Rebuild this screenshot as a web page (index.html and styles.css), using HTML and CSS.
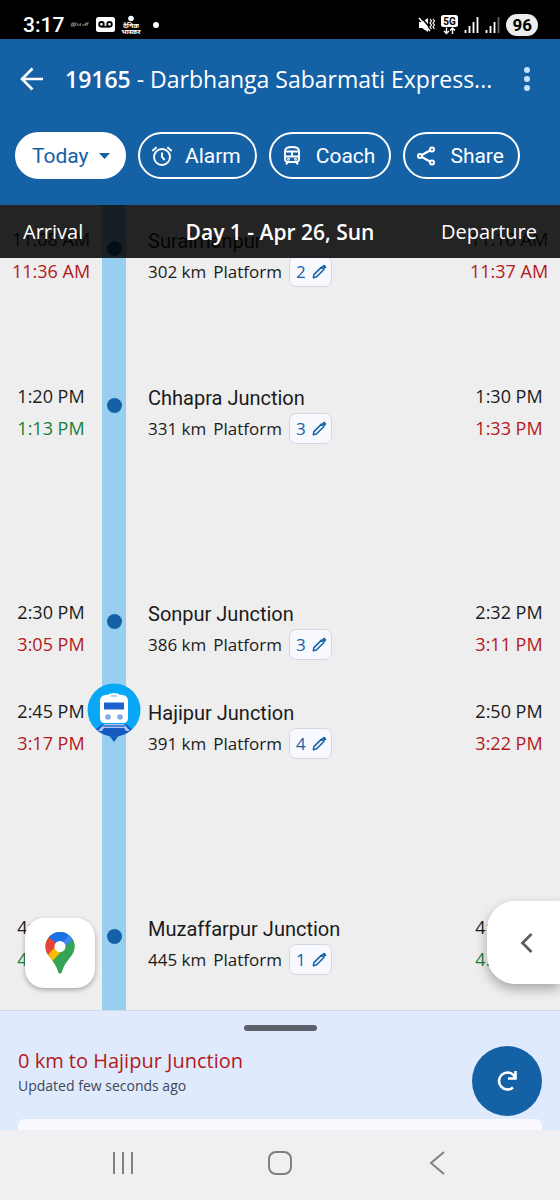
FILE: index.html
```html
<!DOCTYPE html>
<html lang="en">
<head>
  <meta charset="UTF-8">
  <title>19165 - Darbhanga Sabarmati Express</title>
  <meta name="viewport" content="width=device-width, initial-scale=1.0">
  <link rel="stylesheet" href="styles.css">
</head>
<body>
  <!-- Shared icons -->
  <svg class="defs" width="0" height="0" aria-hidden="true">
    <symbol id="pencil" viewBox="0 0 14 14">
      <path d="M1.2 12.8l.6-2.900 7-7 2.300 2.300-7 7z" fill="none" stroke="currentColor" stroke-width="1.400" stroke-linejoin="round"/>
      <path d="M9.300 2.300l1.300-1.300q.7-.6 1.400 0l1 1q.6.7 0 1.400l-1.300 1.300z" fill="currentColor"/>
    </symbol>
  </svg>

  <div class="phone">
    <div class="status-bar">
      <span class="clock">3:17</span>
      <svg width="20" height="8" viewBox="0 0 20 8" aria-hidden="true">
        <path d="M1 5l1-3h4l-1 3zM7 5l1-3M8 4h3M11 2l-1 3" fill="#555" stroke="#777" stroke-width="1"/>
        <path d="M12 4h3l1-2h2l-1 2h-2" fill="none" stroke="#8f8464" stroke-width="1.200"/>
      </svg>
      <svg width="19" height="15" viewBox="0 0 19 15" aria-hidden="true">
        <rect width="19" height="15" rx="2.500" fill="#fff"/>
        <g fill="none" stroke="#000" stroke-width="1.800"><circle cx="5.500" cy="7.300" r="2.300"/><circle cx="13.500" cy="7.300" r="2.300"/><path d="M5.500 9.700h8"/></g>
      </svg>
      <svg width="20" height="20" viewBox="0 0 20 20" aria-hidden="true">
        <circle cx="10" cy="3.500" r="2.800" fill="#fff"/>
        <text class="paper" x="10" y="13" text-anchor="middle">दैनिक</text>
        <text class="paper" x="10" y="19" text-anchor="middle">भास्कर</text>
      </svg>
      <span class="more-dot"></span>
      <div class="status-right">
        <svg width="17" height="18" viewBox="0 0 17 18" aria-hidden="true">
          <path d="M1 6h3l6-4v14l-6-4H1z" fill="#fff"/>
          <path d="M2 0l12 14" stroke="#000" stroke-width="1.500"/>
          <path d="M1 2l11 13" stroke="#fff" stroke-width="1.500"/>
          <path d="M12 3l1.500 2-1.500 2 1.500 2-1.500 2 1.500 2M15 3l1.500 2-1.500 2 1.500 2-1.500 2 1.500 2" fill="none" stroke="#fff" stroke-width="1.200"/>
        </svg>
        <svg width="17" height="20" viewBox="0 0 17 20" aria-hidden="true">
          <rect width="17" height="12" rx="2.500" fill="#fff"/>
          <text class="net" x="8.500" y="9.500" text-anchor="middle">5G</text>
          <path d="M5.500 12.500v6M3 16l2.500 2.500L8 16M11.500 19v-6M9 15.500l2.500-2.500 2.500 2.500" fill="none" stroke="#fff" stroke-width="1.400"/>
        </svg>
        <svg width="15" height="16" viewBox="0 0 15 16" aria-hidden="true">
          <path d="M1.500 13v3M5.500 9v7M9.500 5v11M13.500 0v16" stroke="#fff" stroke-width="1.800"/>
        </svg>
        <svg width="15" height="16" viewBox="0 0 15 16" aria-hidden="true">
          <path d="M1.500 13v3M5.500 9v7M9.500 5v11" stroke="#fff" stroke-width="1.800"/>
          <path d="M13.500 0v16" stroke="#666" stroke-width="1.800"/>
        </svg>
        <span class="battery">96</span>
      </div>
    </div>

    <header class="app-header">
      <div class="title-row">
        <button class="icon-btn" aria-label="Back">
          <svg width="24" height="24" viewBox="0 0 24 24"><path d="M23 12H2M12.500 1.500L2 12l10.500 10.500" fill="none" stroke="#fff" stroke-width="2.600"/></svg>
        </button>
        <h1><b>19165</b> - Darbhanga Sabarmati Express...</h1>
        <button class="icon-btn" aria-label="More options">
          <svg width="6" height="24" viewBox="0 0 6 24" fill="#c5e3fb"><circle cx="3" cy="3" r="3"/><circle cx="3" cy="12" r="3"/><circle cx="3" cy="21" r="3"/></svg>
        </button>
      </div>
      <div class="chips">
        <label class="chip chip-day">
          <select aria-label="Journey day"><option>Today</option></select>
          <svg width="11" height="6" viewBox="0 0 11 6"><path d="M0 0h11L5.500 6z" fill="#1461a6"/></svg>
        </label>
        <button class="chip">
          <svg width="22" height="22" viewBox="0 0 22 22" fill="none" stroke="#fff" stroke-width="1.900">
            <circle cx="11" cy="12" r="8"/><path d="M11 7.500V12l2.700 3M1.300 6L5.600 2.200M20.700 6l-4.300-3.800"/>
          </svg>
          Alarm
        </button>
        <button class="chip">
          <svg width="22" height="22" viewBox="0 0 22 22" fill="none" stroke="#fff" stroke-width="1.900">
            <path d="M3 6q0-4 7-4t7 4v8q0 3-3 3H6q-3 0-3-3zM3 6.500h14M3 11.500h14M10 6.500v5M6 17l-2 2.500M14 17l2 2.500"/>
            <circle cx="6.500" cy="14.300" r=".5"/><circle cx="13.500" cy="14.300" r=".5"/>
          </svg>
          Coach
        </button>
        <button class="chip">
          <svg width="22" height="22" viewBox="0 0 22 22" fill="none" stroke="#fff" stroke-width="2">
            <circle cx="4" cy="11" r="2"/><circle cx="16" cy="4.500" r="2"/><circle cx="16" cy="17.500" r="2"/><path d="M5.800 10L14 5.500M5.800 12l8.200 4.500"/>
          </svg>
          Share
        </button>
      </div>
    </header>

    <main class="timeline">
      <div class="day-bar">
        <span>Arrival</span>
        <b>Day 1 - Apr 26, Sun</b>
        <span>Departure</span>
      </div>

      <ul class="stops">
        <li class="stop gap-m">
          <div class="time">11:08 AM<span class="late">11:36 AM</span></div>
          <div class="track"><i class="dot"></i></div>
          <div class="info">
            <h2>Suraimanpur</h2>
            <p>302 km <span>Platform</span> <button class="platform">2 <svg><use href="#pencil"/></svg></button></p>
          </div>
          <div class="time">11:10 AM<span class="late">11:37 AM</span></div>
        </li>
        <li class="stop gap-l">
          <div class="time">1:20 PM<span class="early">1:13 PM</span></div>
          <div class="track"><i class="dot"></i></div>
          <div class="info">
            <h2>Chhapra Junction</h2>
            <p>331 km <span>Platform</span> <button class="platform">3 <svg><use href="#pencil"/></svg></button></p>
          </div>
          <div class="time">1:30 PM<span class="late">1:33 PM</span></div>
        </li>
        <li class="stop gap-s">
          <div class="time">2:30 PM<span class="late">3:05 PM</span></div>
          <div class="track"><i class="dot"></i></div>
          <div class="info">
            <h2>Sonpur Junction</h2>
            <p>386 km <span>Platform</span> <button class="platform">3 <svg><use href="#pencil"/></svg></button></p>
          </div>
          <div class="time">2:32 PM<span class="late">3:11 PM</span></div>
        </li>
        <li class="stop gap-l">
          <div class="time">2:45 PM<span class="late">3:17 PM</span></div>
          <div class="track">
            <!-- Current train position -->
            <svg class="train" width="54" height="60" viewBox="0 0 54 60" aria-label="Train is here">
              <defs><clipPath id="disc"><circle cx="27" cy="27" r="26.500"/></clipPath></defs>
              <path d="M15 48h24q-7 3-12 11-5-8-12-11z" fill="#1659bf"/>
              <circle cx="27" cy="27" r="26.500" fill="#08a8f7"/>
              <path d="M0 54l15-13h24l15 13z" fill="#1659bf" clip-path="url(#disc)"/>
              <path d="M17 41h20l6 7h-4l-2-3H17l-2 3h-4z" fill="#a9c4f5"/>
              <path d="M16 43h22" stroke="#1659bf" stroke-width="1.200"/>
              <path d="M13 18q0-5 5-6l4-.5q1-1.500 5-1.500t5 1.500l4 .5q5 1 5 6v17q0 5-5 5H18q-5 0-5-5z" fill="#fff"/>
              <path d="M24 13h6" stroke="#8db4ee" stroke-width="1.200"/>
              <path d="M17 19.500h20v7H17z" fill="#1c63d0"/>
              <circle cx="21" cy="34" r="2.800" fill="#83a9ed"/><circle cx="33" cy="34" r="2.800" fill="#83a9ed"/>
            </svg>
          </div>
          <div class="info">
            <h2>Hajipur Junction</h2>
            <p>391 km <span>Platform</span> <button class="platform">4 <svg><use href="#pencil"/></svg></button></p>
          </div>
          <div class="time">2:50 PM<span class="late">3:22 PM</span></div>
        </li>
        <li class="stop gap-s">
          <div class="time">4:00 PM<span class="early">4:00 PM</span></div>
          <div class="track"><i class="dot"></i></div>
          <div class="info">
            <h2>Muzaffarpur Junction</h2>
            <p>445 km <span>Platform</span> <button class="platform">1 <svg><use href="#pencil"/></svg></button></p>
          </div>
          <div class="time">4:05 PM<span class="early">4:05 PM</span></div>
        </li>
      </ul>

      <button class="map-btn" aria-label="Open map">
        <svg width="30" height="42" viewBox="0 0 30 42">
          <defs><clipPath id="pin"><path d="M15 0a14.500 14.500 0 0 1 14.500 14.500c0 6-3 9-6.500 13.500-3 4-4.500 6-6 11q-.5 2.500-2 2.500t-2-2.500c-1.500-5-3-7-6-11C3.500 23.500.5 20.500.5 14.500A14.500 14.500 0 0 1 15 0z"/></clipPath></defs>
          <g clip-path="url(#pin)">
            <path d="M0 0h30v42H0z" fill="#34a353"/>
            <path d="M-2 2h8l10 10L2.500 26-2 20z" fill="#e94435"/>
            <path d="M3.500 5L15 14.500 26.500 0H3z" fill="#1a70e5"/>
            <path d="M10 20L25 2l7 5-16 19z" fill="#4384f3"/>
            <path d="M1 25l10-11 8 5L7 33z" fill="#fbbb07"/>
            <path d="M7.500 29L29 5.500l4 8V42H10z" fill="#34a353"/>
          </g>
          <circle cx="15" cy="14.500" r="5.500" fill="#fff"/>
        </svg>
      </button>
      <button class="drawer-btn" aria-label="Open drawer">
        <svg width="13" height="20" viewBox="0 0 13 20"><path d="M11.500 1L2.500 10l9 9" fill="none" stroke="#5e5e5e" stroke-width="2.800"/></svg>
      </button>
    </main>

    <section class="sheet">
      <div class="handle"></div>
      <div class="sheet-row">
        <div class="position">
          <h3>0 km to Hajipur Junction</h3>
          <p>Updated few seconds ago</p>
        </div>
        <button class="refresh" aria-label="Refresh">
          <svg width="22" height="22" viewBox="0 0 22 22" fill="none" stroke="#fff" stroke-width="2.600"><path d="M17 17.500a8.500 8.500 0 1 1 .5-12.500l2 3M19.500 1v7.500H12"/></svg>
        </button>
      </div>
      <div class="sheet-card"></div>
    </section>

    <nav class="nav-bar">
      <button class="icon-btn" aria-label="Recent apps">
        <svg width="22" height="24" viewBox="0 0 22 24"><path d="M2 1v22M11 1v22M20 1v22" stroke="#808083" stroke-width="2"/></svg>
      </button>
      <button class="icon-btn" aria-label="Home">
        <svg width="24" height="24" viewBox="0 0 24 24"><rect x="1" y="1" width="22" height="22" rx="7" fill="none" stroke="#808083" stroke-width="2"/></svg>
      </button>
      <button class="icon-btn" aria-label="Back">
        <svg width="16" height="24" viewBox="0 0 16 24"><path d="M15 1L2 12l13 11" fill="none" stroke="#808083" stroke-width="2"/></svg>
      </button>
    </nav>
  </div>
</body>
</html>
```

FILE: styles.css
```css
:root {
  --blue: #1461a6;
  --track: #98cff0;
  --bg: #eeeeee;
  --text: #1b1b1b;
  --late: #b3191d;
  --early: #17803a;
  --sheet: #e0eafd;
}

/* Reset */
* {
  margin: 0;
  padding: 0;
  box-sizing: border-box;
}

body {
  background: var(--bg);
  color: var(--text);
  font-family: "Open Sans", "Noto Sans", sans-serif;
}

button,
select {
  font: inherit;
  color: inherit;
  background: none;
  border: none;
}

svg {
  display: block;
  flex-shrink: 0;
}
.defs {
  position: absolute;
}

.phone {
  display: flex;
  flex-direction: column;
  height: 100vh;
}

/* Status bar */
.status-bar {
  display: flex;
  align-items: center;
  gap: 6px;
  height: 39px;
  padding: 10px 22px 0 23px;
  background: #000;
  color: #fff;
}
.clock {
  font: 500 21px Roboto, sans-serif;
}
.paper {
  font: bold 7px "Noto Sans", sans-serif;
  fill: #fff;
}
.more-dot {
  width: 6px;
  height: 6px;
  margin-left: 6px;
  border-radius: 50%;
  background: #fff;
}
.status-right {
  display: flex;
  align-items: center;
  gap: 6px;
  margin-left: auto;
}
.net {
  font: bold 10px Roboto, sans-serif;
  fill: #000;
}
.battery {
  padding: 0 6px;
  border-radius: 11px;
  background: #ededed;
  color: #000;
  font: bold 17px/22px Roboto, sans-serif;
}

/* Header */
.app-header {
  padding: 20px 15px 26px;
  background: var(--blue);
  color: #fff;
}
.title-row {
  display: flex;
  align-items: center;
  height: 40px;
  padding: 0 15px 0 5px;
}
.title-row h1 {
  flex: 1;
  min-width: 0;
  padding-left: 21px;
  font-size: 23px;
  font-weight: 400;
  white-space: nowrap;
}
.title-row b {
  font-weight: 600;
}
.chips {
  display: flex;
  gap: 12px;
  margin-top: 33px;
}
.chip {
  display: flex;
  align-items: center;
  gap: 12px;
  height: 47px;
  padding: 0 14px 0 11px;
  border: 2px solid #fff;
  border-radius: 24px;
  font: 21px Roboto, sans-serif;
}
.chip-day {
  gap: 10px;
  padding: 0 14px 0 15px;
  background: #fff;
  color: var(--blue);
}
.chip-day select {
  appearance: none;
}

/* Timeline */
.timeline {
  position: relative;
  flex: 1;
  min-height: 0;
  overflow: hidden;
}
.day-bar {
  position: absolute;
  top: 0;
  left: 0;
  right: 0;
  z-index: 2;
  display: grid;
  grid-template-columns: 1fr auto 1fr;
  align-items: center;
  height: 53px;
  padding: 0 23px;
  background: rgba(0, 0, 0, 0.85);
  color: #fff;
  font-size: 20px;
}
.day-bar b {
  font-size: 21px;
  font-weight: 600;
}
.day-bar span:last-child {
  text-align: right;
}
.stops {
  min-height: 100%;
  padding-top: 18px;
  list-style: none;
  background: linear-gradient(var(--track), var(--track)) 102px 0 / 24px 100% no-repeat;
}
.stop {
  display: grid;
  grid-template-columns: 102px 24px 1fr 102px;
}
.gap-s { min-height: 99px; }
.gap-m { min-height: 157px; }
.gap-l { min-height: 216px; }
.time {
  font-size: 18px;
  line-height: 32px;
  text-align: center;
}
.time span {
  display: block;
}
.late { color: var(--late); }
.early { color: var(--early); }
.track {
  position: relative;
  display: flex;
  justify-content: center;
}
.dot {
  width: 15px;
  height: 15px;
  margin-top: 18px;
  border-radius: 50%;
  background: var(--blue);
}
.train {
  position: absolute;
  top: -12px;
}
.info {
  padding-left: 22px;
}
.info h2 {
  font: 20px/36px Roboto, sans-serif;
}
.info p {
  display: flex;
  align-items: center;
  gap: 7px;
  height: 24px;
  font-size: 17px;
}
.platform {
  display: flex;
  align-items: center;
  gap: 6px;
  height: 31px;
  padding: 0 4px 0 6px;
  border: 1px solid #d5d7e3;
  border-radius: 7px;
  background: #f8f9ff;
  color: var(--blue);
}
.platform svg {
  width: 15px;
  height: 15px;
}

/* Floating buttons */
.map-btn,
.drawer-btn {
  position: absolute;
  display: flex;
  align-items: center;
  justify-content: center;
  background: #fff;
}
.map-btn {
  left: 25px;
  bottom: 22px;
  width: 70px;
  height: 70px;
  border-radius: 19px;
  box-shadow: 0 2px 5px rgba(0, 0, 0, 0.3);
}
.drawer-btn {
  right: 0;
  bottom: 26px;
  width: 73px;
  height: 83px;
  padding-left: 6px;
  border-radius: 28px 0 0 28px;
  box-shadow: 0 5px 12px rgba(0, 0, 0, 0.3);
}

/* Bottom sheet */
.sheet {
  position: relative;
  height: 120px;
  padding: 14px 18px 0;
  overflow: hidden;
  background: var(--sheet);
  border-top: 1px solid #d0d8e6;
}
.handle {
  width: 73px;
  height: 6px;
  margin: 0 auto 15px;
  border-radius: 3px;
  background: #5c626c;
}
.sheet-row {
  display: flex;
  justify-content: space-between;
}
.position {
  padding-top: 2px;
}
.position h3 {
  color: var(--late);
  font-size: 20px;
  font-weight: 400;
  line-height: 26px;
}
.position p {
  color: #3d475a;
  font-size: 14px;
  line-height: 24px;
}
.refresh {
  display: flex;
  align-items: center;
  justify-content: center;
  width: 70px;
  height: 70px;
  border-radius: 50%;
  background: var(--blue);
}
.sheet-card {
  height: 40px;
  margin-top: 3px;
  border-radius: 6px;
  background: #f9f9ff;
}

/* System navigation */
.nav-bar {
  display: grid;
  grid-template-columns: repeat(3, 157px);
  justify-content: center;
  align-items: center;
  height: 70px;
  padding-bottom: 4px;
  background: #f0f0f2;
}
.nav-bar svg {
  margin: 0 auto;
}
```
